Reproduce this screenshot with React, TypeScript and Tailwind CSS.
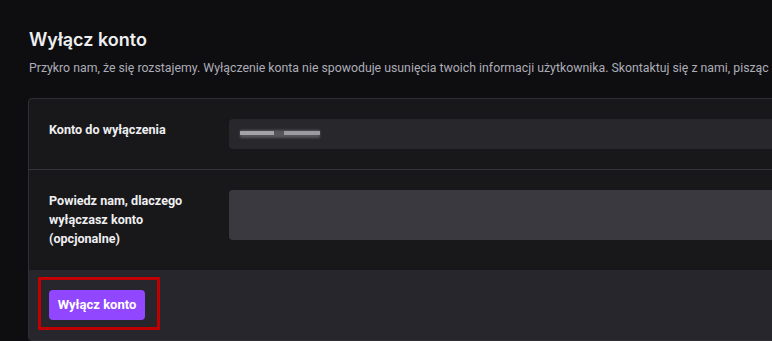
import React from 'react'

const font = { fontFamily: 'Inter, "Noto Sans", sans-serif' }
const body = { fontFamily: 'Roboto, "Noto Sans", sans-serif' }

export default function App() {
  return (
    <div className="w-[772px] h-[341px] overflow-hidden bg-[#0e0e10]" style={font}>
      <div className="w-[1100px] pl-[29px] pt-[28px]">
        {/* nagłówek */}
        <h1 className="text-[18px] leading-[24px] font-semibold text-[#efeff1]">Wyłącz konto</h1>
        <p className="mt-[7px] text-[12.3px] leading-[18px] text-[#adadb8] whitespace-nowrap" style={body}>
          Przykro nam, że się rozstajemy. Wyłączenie konta nie spowoduje usunięcia twoich informacji użytkownika. Skontaktuj się z nami, pisząc na adres
        </p>

        <div className="mt-[21px] -ml-px rounded-[4px] border border-[#2f2f35] bg-[#18181b] overflow-hidden" style={body}>
          <div className="flex px-5 py-5 border-b border-[#35353b]">
            <div className="w-[180px] shrink-0 text-[12.6px] leading-[18px] font-bold text-[#efeff1] pt-[2px]">
              Konto do wyłączenia
            </div>
            <div className="flex-1 h-[30px] rounded-[4px] bg-[#27272c] flex items-center pl-[11px]">
              <div className="relative w-[80px] h-[10px]">
                <div className="absolute left-0 top-[1px] w-[80px] h-[8px] bg-[#55555b] blur-[1px]" />
                <div className="absolute left-0 top-[2px] w-[34px] h-[4px] bg-[#a3a3a8] blur-[0.5px]" />
                <div className="absolute left-[44px] top-[2px] w-[36px] h-[4px] bg-[#9a9aa0] blur-[0.5px]" />
              </div>
            </div>
          </div>

          <div className="flex px-5 pt-5 pb-[22px]">
            <div className="w-[180px] shrink-0 text-[12.6px] leading-[19px] font-bold text-[#efeff1] pt-[1px]">
              Powiedz nam, dlaczego
              <br />
              wyłączasz konto
              <br />
              (opcjonalne)
            </div>
            <div className="flex-1 h-[50px] rounded-[4px] bg-[#3a393f]" />
          </div>

          <div className="bg-[#26262c] px-5 py-5">
            <div className="relative inline-block">
              <button className="h-[30px] w-[96px] rounded-[4px] bg-[#9147ff] text-[13px] font-bold text-white">
                Wyłącz konto
              </button>
              <div className="absolute -left-[11px] -top-[13px] w-[122px] h-[53px] border-[3px] border-[#c00000] pointer-events-none" />
            </div>
          </div>
        </div>
      </div>
    </div>
  )
}
